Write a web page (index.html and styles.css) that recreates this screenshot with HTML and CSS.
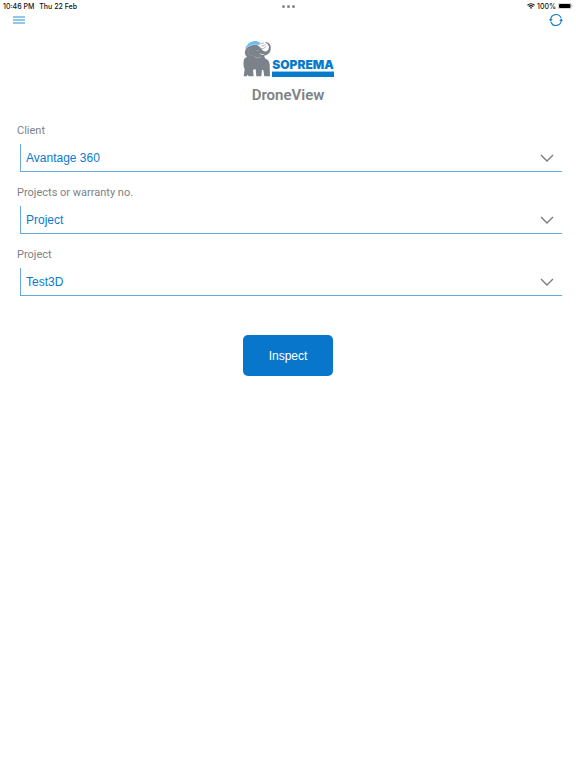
FILE: index.html
```html
<!DOCTYPE html>
<html lang="en">
<head>
    <meta charset="UTF-8">
    <meta name="viewport" content="width=device-width, initial-scale=1">
    <title>DroneView</title>
    <link rel="stylesheet" href="styles.css">
</head>
<body>

<div class="status-bar">
    <div class="status-left">
        <span>10:46 PM</span>
        <span>Thu 22 Feb</span>
    </div>
    <div class="dots"><i></i><i></i><i></i></div>
    <div class="status-right">
        <svg width="8" height="6" viewBox="0 0 16 12" fill="none" stroke="#111" stroke-width="2.4">
            <path d="M1 4.5Q8-1.5 15 4.5M3.6 7.3Q8 3.6 12.4 7.3"/>
            <path d="M5.6 9.2Q8 7.4 10.4 9.2L8 11.8z" fill="#111" stroke="none"/>
        </svg>
        <span>100%</span>
        <svg width="15" height="6" viewBox="0 0 30 12">
            <rect x="0.5" y="0.5" width="26" height="11" rx="3" fill="#fff" stroke="#999"/>
            <rect x="2" y="2" width="23" height="8" rx="2" fill="#000"/>
            <path d="M28 4v4q2-2 0-4z" fill="#999"/>
        </svg>
    </div>
</div>

<header class="toolbar">
    <button class="icon-button" type="button" aria-label="Menu">
        <svg width="12" height="8" viewBox="0 0 12 8">
            <path d="M0 1h12M0 4h12M0 7h12" stroke="#2b8fd0" stroke-width="1"/>
        </svg>
    </button>
    <button class="icon-button" type="button" aria-label="Refresh">
        <svg width="14" height="14" viewBox="0 0 42 42" fill="none" stroke="#1583cf" stroke-width="3.5">
            <path d="M5 20A16 16 0 0 1 36 15M37 22A16 16 0 0 1 6 27"/>
            <path d="M0 18h11l-5.5 8zM31 24h11l-5.5-8z" fill="#1583cf" stroke="none"/>
        </svg>
    </button>
</header>

<main>
    <div class="brand">
        <div class="logo">
            <svg class="elephant" width="30" height="37" viewBox="24 14 90 111" aria-hidden="true">
                <path d="M33 42Q41 18 62 17Q72 16 79 23L73 29Q54 22 33 42z" fill="#6dbdf0"/>
                <path d="M33 48Q35 38 47 33Q57 26 69 29Q78 33 83 42Q91 52 99 47Q107 41 104 31Q101 24 94 23L95 20Q107 21 110 33Q112 49 101 57Q96 61 90 61L94 70Q106 73 107 88L108 123H91L88 105L84 103L82 123H67L65 101Q61 104 57 103L59 123H44L41 118L38 123H29L32 102Q26 89 30 72Q34 66 39 65Q31 58 33 48z" fill="#7b8289"/>
                <path d="M78 39Q90 44 95 33M82 32Q91 34 94 26M76 28Q82 23 90 23" fill="none" stroke="#899096" stroke-width="2"/>
                <path d="M61 64Q70 71 81 65M68 47l6-2" fill="none" stroke="#b7bbc0" stroke-width="2"/>
                <path d="M46 40Q40 48 43 57Q49 65 57 59" fill="none" stroke="#959ba0" stroke-width="2"/>
                <path d="M74 52Q82 62 94 55Q82 58 74 52z" fill="#fff"/>
            </svg>
            <div class="wordmark">SOPREMA</div>
        </div>
        <h1>DroneView</h1>
    </div>

    <form>
        <div class="field">
            <label for="client">Client</label>
            <div class="select-box">
                <select id="client">
                    <option>Avantage 360</option>
                </select>
                <svg class="chevron" width="14" height="8" viewBox="0 0 14 8"><path d="M1 1l6 6 6-6"/></svg>
            </div>
        </div>
        <div class="field">
            <label for="search-by">Projects or warranty no.</label>
            <div class="select-box">
                <select id="search-by">
                    <option>Project</option>
                </select>
                <svg class="chevron" width="14" height="8" viewBox="0 0 14 8"><path d="M1 1l6 6 6-6"/></svg>
            </div>
        </div>
        <div class="field">
            <label for="project">Project</label>
            <div class="select-box">
                <select id="project">
                    <option>Test3D</option>
                </select>
                <svg class="chevron" width="14" height="8" viewBox="0 0 14 8"><path d="M1 1l6 6 6-6"/></svg>
            </div>
        </div>
        <button class="inspect" type="button">Inspect</button>
    </form>
</main>

</body>
</html>
```

FILE: styles.css
```css
* {
    box-sizing: border-box;
}
body {
    margin: 0;
    background: #fff;
    color: #7d8287;
    font-family: "Liberation Sans", Arial, sans-serif;
}
.status-bar {
    display: grid;
    grid-template-columns: 1fr auto 1fr;
    align-items: center;
    height: 12px;
    padding: 0 3px;
    color: #111;
    font-family: Inter, sans-serif;
    font-size: 7px;
    font-weight: 500;
}
.status-left {
    display: flex;
    gap: 5px;
}
.status-right {
    display: flex;
    align-items: center;
    justify-content: flex-end;
    gap: 2px;
}
.dots {
    display: flex;
    gap: 2px;
}
.dots i {
    width: 3px;
    height: 3px;
    border-radius: 50%;
    background: #888;
}
.toolbar {
    display: flex;
    justify-content: space-between;
    padding: 0 12px;
}
.icon-button {
    display: flex;
    align-items: center;
    height: 16px;
    padding: 0 1px;
    border: none;
    background: none;
    cursor: pointer;
}
.brand {
    display: flex;
    flex-direction: column;
    align-items: center;
    padding-top: 12px;
}
.logo {
    display: flex;
    align-items: flex-end;
}
.wordmark {
    color: #087bcd;
    font-family: Inter, sans-serif;
    font-size: 12px;
    font-weight: 900;
    line-height: 12px;
}
.wordmark::after {
    content: "";
    display: block;
    height: 5px;
    border-top: 1px solid #8fc5eb;
    background: #087bcd;
}
h1 {
    margin: 8px 0 0;
    font-family: Roboto, sans-serif;
    font-size: 15px;
    font-weight: 600;
    line-height: 20px;
}
form {
    display: flex;
    flex-direction: column;
    padding: 18px 17px 0;
}
.field {
    margin-bottom: 12px;
}
.field label {
    display: block;
    font-family: Roboto, sans-serif;
    font-size: 11px;
    line-height: 16px;
}
.select-box {
    display: flex;
    align-items: center;
    height: 28px;
    margin: 5px -3px 0 3px;
    border-left: 1px solid #64aadd;
    border-bottom: 1px solid #64aadd;
}
.field + .field {
    margin-top: 1px;
}
.select-box select {
    flex: 1;
    height: 27px;
    margin-right: -22px;
    padding: 0 22px 0 5px;
    border: none;
    background: none;
    appearance: none;
    color: #087bcd;
    font-family: inherit;
    font-size: 12px;
}
.chevron {
    margin-right: 8px;
    fill: none;
    stroke: #777c80;
    stroke-width: 1.4;
    pointer-events: none;
}
.inspect {
    align-self: center;
    width: 90px;
    height: 41px;
    margin-top: 27px;
    border: none;
    border-radius: 5px;
    background: #0877cb;
    color: #fff;
    font-family: inherit;
    font-size: 12px;
    cursor: pointer;
}
.inspect:hover {
    background: #0669b4;
}
```
